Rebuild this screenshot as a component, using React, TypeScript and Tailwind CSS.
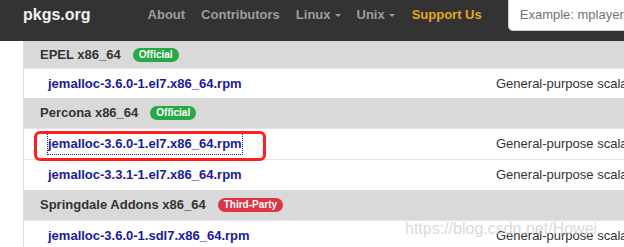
import React from 'react';

type Row = { name: string; desc: string; focused?: boolean };
type Group = { title: string; badge: string; badgeClass: string; rows: Row[]; headH: string; rowH: string[] };

const groups: Group[] = [
  {
    title: 'EPEL x86_64',
    badge: 'Official',
    badgeClass: 'bg-[#28a745]',
    headH: 'h-[27px]',
    rowH: ['h-[30px]'],
    rows: [{ name: 'jemalloc-3.6.0-1.el7.x86_64.rpm', desc: 'General-purpose scalable concurrent malloc' }],
  },
  {
    title: 'Percona x86_64',
    badge: 'Official',
    badgeClass: 'bg-[#28a745]',
    headH: 'h-[30px]',
    rowH: ['h-[31px]', 'h-[31px]'],
    rows: [
      { name: 'jemalloc-3.6.0-1.el7.x86_64.rpm', desc: 'General-purpose scalable concurrent malloc', focused: true },
      { name: 'jemalloc-3.3.1-1.el7.x86_64.rpm', desc: 'General-purpose scalable concurrent malloc' },
    ],
  },
  {
    title: 'Springdale Addons x86_64',
    badge: 'Third-Party',
    badgeClass: 'bg-[#dc3545]',
    headH: 'h-[30px]',
    rowH: ['h-[31px]'],
    rows: [{ name: 'jemalloc-3.6.0-1.sdl7.x86_64.rpm', desc: 'General-purpose scalable concurrent malloc' }],
  },
];

function Caret() {
  return <span className="ml-[4px] inline-block w-0 h-0 border-l-[3px] border-r-[3px] border-t-[3px] border-l-transparent border-r-transparent border-t-[#9d9d9d] align-middle" />;
}

export default function App() {
  return (
    <div className="relative w-[624px] h-[247px] overflow-hidden bg-white" style={{ fontFamily: '"Liberation Sans", Arial, sans-serif' }}>
      <nav className="h-[41px] bg-[#333333] flex items-start overflow-hidden whitespace-nowrap">
        <div className="h-[30px] flex items-center pl-[23px] text-[16px] font-bold text-[#f2f2f2]">pkgs.org</div>
        <div className="h-[30px] flex items-center ml-[57px] text-[13px] font-bold text-[#9d9d9d]">
          <span>About</span>
          <span className="ml-[16px]">Contributors</span>
          <span className="ml-[16px] flex items-center">Linux<Caret /></span>
          <span className="ml-[16px] flex items-center">Unix<Caret /></span>
          <span className="ml-[17px] text-[#e5a71c]">Support Us</span>
        </div>
        <div className="ml-[26px] shrink-0 w-[150px] h-[31px] bg-white rounded-b-[5px] border border-t-0 border-[#cccccc] flex items-center pl-[11px] text-[13px] text-[#6c757d]">
          Example: mplayer
        </div>
      </nav>

      <div className="ml-[23px] border-l border-[#dddddd] text-[13px]">
        {groups.map((g) => (
          <div key={g.title}>
            <div className={`${g.headH} bg-[#d9d9d9] flex items-center pl-[16px]`}>
              <span className="font-bold text-[#333333]">{g.title}</span>
              <span className={`ml-[12px] ${g.badgeClass} text-white text-[10px] font-bold rounded-full px-[6px] h-[14px] flex items-center leading-none`}>{g.badge}</span>
            </div>
            {g.rows.map((r, i) => (
              <div key={r.name + i} className={`${g.rowH[i]} flex border-t border-[#e3e3ea] first:border-t-0`}>
                <div className="w-[464px] flex items-center pl-[24px]">
                  <a className={`font-bold text-[#1a1a9a] ${r.focused ? 'outline outline-1 outline-dotted outline-[#1a1a9a]' : ''}`}>{r.name}</a>
                </div>
                <div className="flex-1 flex items-center pl-[8px] text-[#333333] whitespace-nowrap overflow-hidden">{r.desc}</div>
              </div>
            ))}
          </div>
        ))}
      </div>

      <div className="absolute left-[34px] top-[131px] w-[232px] h-[30px] border-[3px] border-[#ff1f1f] rounded-[6px]" />
      <div className="absolute left-[405px] top-[217px] text-[16px] text-[#c8c8c8]/70 whitespace-nowrap">https://blog.csdn.net/Howei</div>
    </div>
  );
}
